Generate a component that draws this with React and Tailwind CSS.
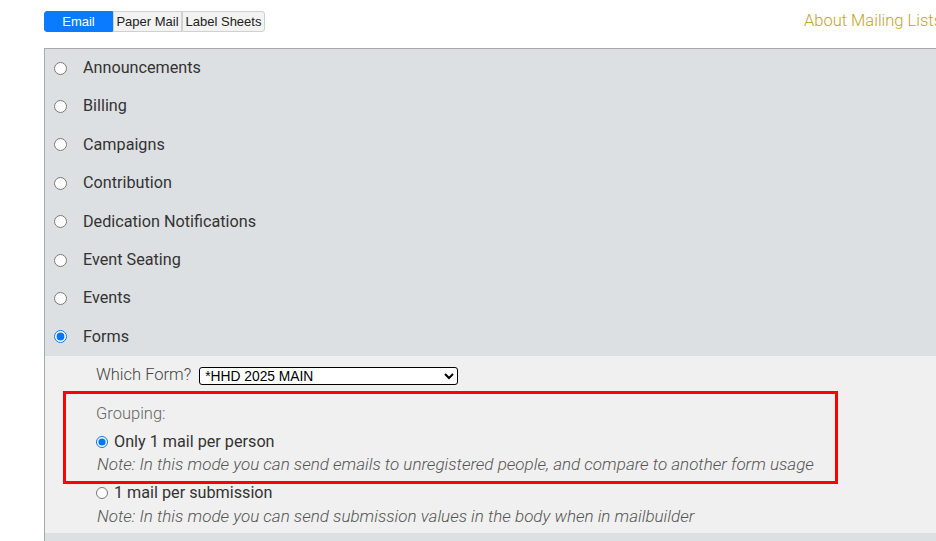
import { useState } from "react";

const lists = [
  "Announcements",
  "Billing",
  "Campaigns",
  "Contribution",
  "Dedication Notifications",
  "Event Seating",
  "Events",
  "Forms",
];

const tabs = [
  { name: "Email", width: "w-[69px]" },
  { name: "Paper Mail", width: "w-[69px]" },
  { name: "Label Sheets", width: "w-[83px]" },
];

function Tabs({ active, onChange }) {
  return (
    <div className="flex h-[21px] text-[13px] font-['Liberation_Sans',Arial,sans-serif]">
      {tabs.map((t, i) => (
        <button
          key={t.name}
          onClick={() => onChange(t.name)}
          className={
            t.width +
            (active === t.name
              ? " bg-[#0a7bff] text-white border-[#0a7bff]"
              : " bg-[#f3f3f3] text-[#222] border-[#d0d0d0]") +
            " border leading-[19px] whitespace-nowrap " +
            (i === 0 ? "rounded-l-[3px] " : "") +
            (i === tabs.length - 1 ? "rounded-r-[3px]" : "")
          }
        >
          {t.name}
        </button>
      ))}
    </div>
  );
}

export default function App() {
  const [tab, setTab] = useState("Email");
  const [list, setList] = useState("Forms");
  const [grouping, setGrouping] = useState("person");

  return (
    <div className="w-[936px] h-[541px] overflow-hidden bg-white font-['Roboto','Noto_Sans',sans-serif] text-[#333]">
      <div className="flex items-center pl-[44px] pt-[11px] h-[48px] pb-[16px]">
        <Tabs active={tab} onChange={setTab} />
        <span className="ml-auto mr-[-6px] text-[16.5px] font-light text-[#c4a42a] whitespace-nowrap">About Mailing Lists</span>
      </div>

      <div className="ml-[44px] border-l border-t border-[#a9a9a9] bg-[#dde0e3] h-[493px]">
        {lists.map((name) => (
          <div key={name}>
            <label className="flex items-center h-[38.4px] cursor-pointer text-[16.2px]">
              <input
                type="radio"
                name="list"
                checked={list === name}
                onChange={() => setList(name)}
                className="m-0 ml-[9px] w-[13px] h-[13px]"
              />
              <span className="ml-[16px]">{name}</span>
            </label>
            {name === "Forms" && list === "Forms" && (
              <div className="bg-[#f0f0f0] pt-[10px] pb-[5px]">
                <div className="flex items-center pl-[51px] h-[19px]">
                  <span className="text-[16.5px] font-light text-[#444]">Which Form?</span>
                  <select className="ml-[8px] w-[259px] h-[18px] bg-white border border-black rounded-[3px] text-[13.8px] text-black font-['Liberation_Sans',Arial,sans-serif] leading-none pl-[1px]">
                    <option>*HHD 2025 MAIN</option>
                  </select>
                </div>

                <div className="mt-[6px] ml-[18px] w-[775px] border-[3px] border-[#ff0000] pl-[30px] pt-[9px] pb-[5px]">
                  <div className="text-[16.5px] font-light text-[#666] leading-[22px]">Grouping:</div>
                  <label className="flex items-center mt-[7px] h-[20px] text-[16.2px] cursor-pointer">
                    <input
                      type="radio"
                      name="grouping"
                      checked={grouping === "person"}
                      onChange={() => setGrouping("person")}
                      className="m-0 w-[12px] h-[12px]"
                    />
                    <span className="ml-[6px]">Only 1 mail per person</span>
                  </label>
                  <div className="italic font-light text-[17px] text-[#555] leading-[24px] ml-[1px] whitespace-nowrap">
                    Note: In this mode you can send emails to unregistered people, and compare to another form usage
                  </div>
                </div>

                <div className="pl-[51px] mt-[-2px]">
                  <label className="flex items-center h-[22px] text-[16.2px] cursor-pointer">
                    <input
                      type="radio"
                      name="grouping"
                      checked={grouping === "submission"}
                      onChange={() => setGrouping("submission")}
                      className="m-0 w-[12px] h-[12px]"
                    />
                    <span className="ml-[6px]">1 mail per submission</span>
                  </label>
                  <div className="italic font-light text-[17px] text-[#555] leading-[24px] ml-[1px] whitespace-nowrap">
                    Note: In this mode you can send submission values in the body when in mailbuilder
                  </div>
                </div>
              </div>
            )}
          </div>
        ))}
      </div>
    </div>
  );
}
